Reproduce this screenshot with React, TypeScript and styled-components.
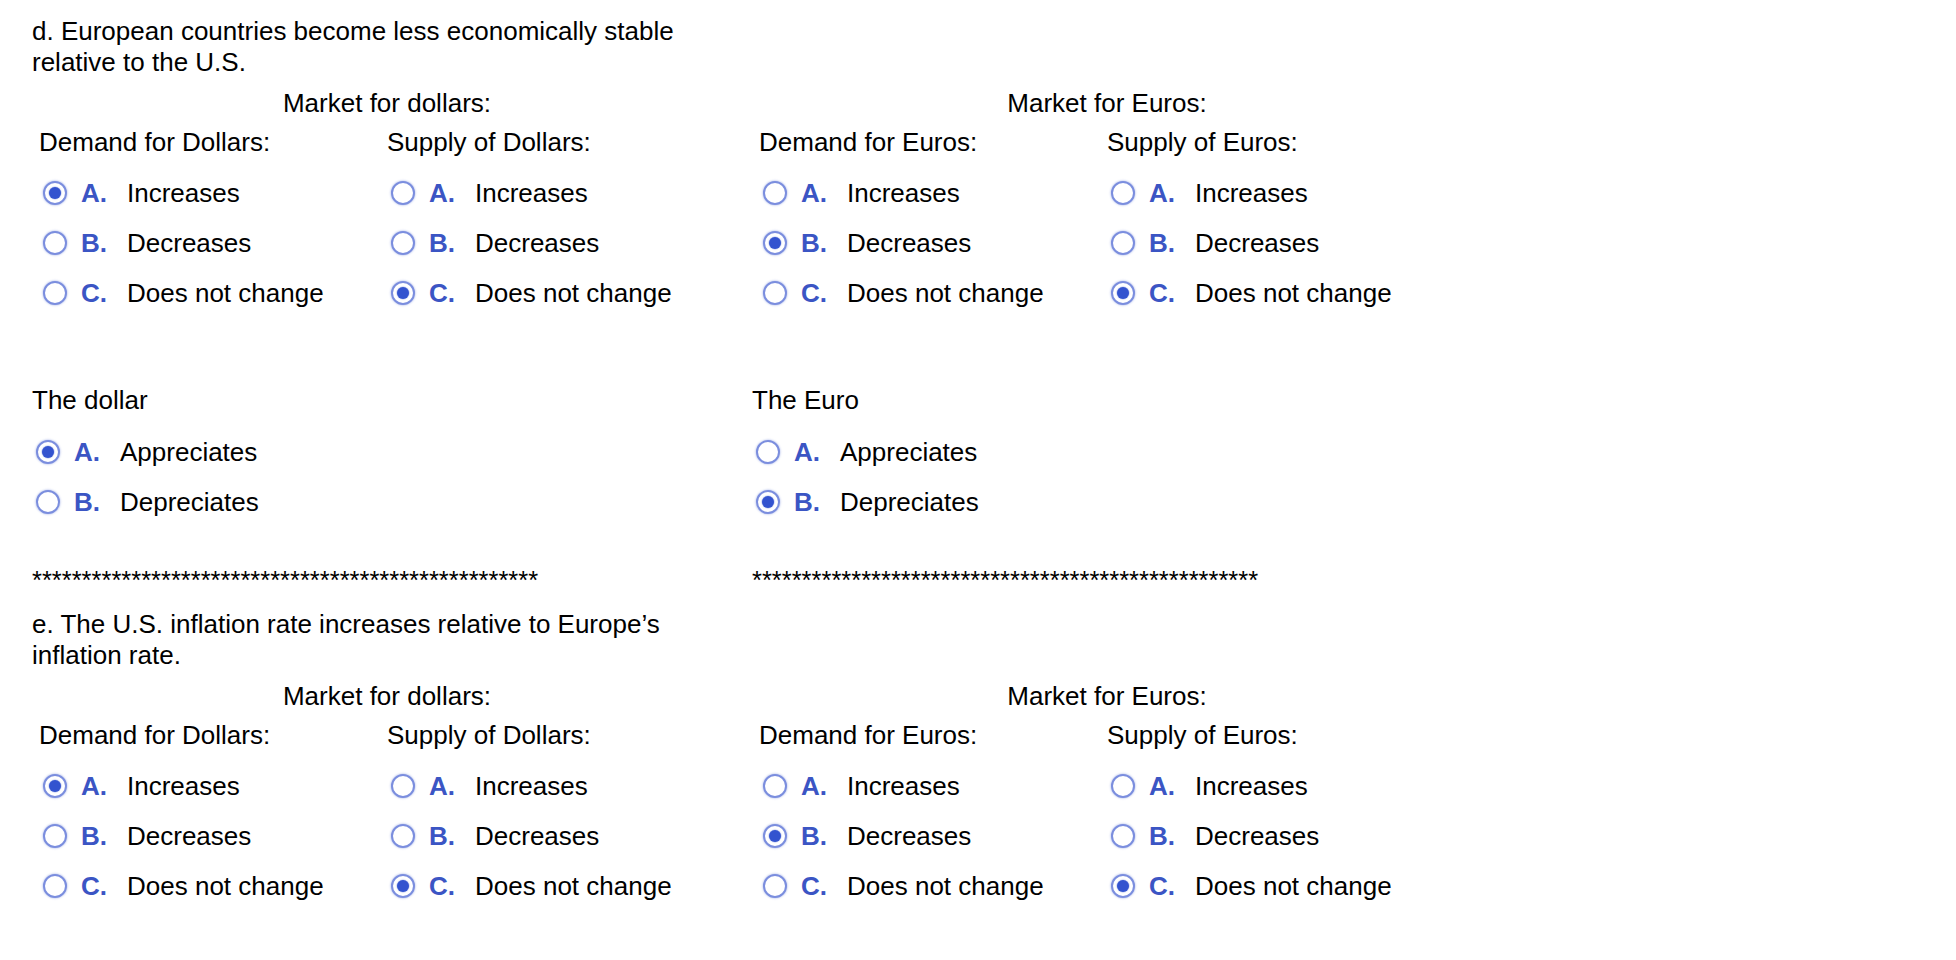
import React from "react";
import styled, { createGlobalStyle } from "styled-components";

const GlobalStyle = createGlobalStyle`
  html, body { margin: 0; padding: 0; background: #ffffff; }
  body {
    font-family: "Liberation Sans", Arial, Helvetica, sans-serif;
    font-size: 26px;
    color: #000000;
  }
`;

const Page = styled.main`
  padding: 16px 0 0 32px;
`;

const Problem = styled.section<{ $top: number }>`
  margin-top: ${(p) => p.$top}px;
`;

const Prompt = styled.p`
  margin: 0;
  max-width: 700px;
  line-height: 31px;
`;

const Pair = styled.div<{ $top: number }>`
  display: grid;
  grid-template-columns: 720px 720px;
  margin-top: ${(p) => p.$top}px;
`;

const MarketTable = styled.div`
  display: grid;
  grid-template-columns: 348px 348px;
  padding-left: 7px;
`;

const MarketTitle = styled.div`
  grid-column: 1 / span 2;
  text-align: center;
  line-height: 31px;
`;

const MarketColumn = styled.div`
  display: flex;
  flex-direction: column;
`;

const ColumnHeading = styled.div`
  margin-top: 7.5px;
  line-height: 31px;
  white-space: nowrap;
`;

const Outcome = styled.div`
  display: flex;
  flex-direction: column;
`;

const OutcomeTitle = styled.div`
  line-height: 31px;
`;

const OptionList = styled.div<{ $top: number }>`
  display: flex;
  flex-direction: column;
  margin-top: ${(p) => p.$top}px;
`;

const OptionRow = styled.div`
  display: flex;
  align-items: center;
  height: 50px;
  line-height: 50px;
  white-space: nowrap;
`;

const Radio = styled.span<{ $checked: boolean }>`
  box-sizing: border-box;
  flex: none;
  width: 24px;
  height: 24px;
  margin-left: 4px;
  margin-right: 14px;
  border-radius: 50%;
  border: 2px solid #7b8ede;
  box-shadow: 0 0 2px 0.5px rgba(110, 132, 217, 0.45);
  display: flex;
  align-items: center;
  justify-content: center;
  background: #ffffff;

  &::after {
    content: "";
    display: ${(p) => (p.$checked ? "block" : "none")};
    width: 12px;
    height: 12px;
    border-radius: 50%;
    background: #3353cf;
    box-shadow: 0 0 1px 0.5px rgba(51, 83, 207, 0.4);
  }
`;

const Letter = styled.span`
  flex: none;
  width: 46px;
  color: #3b55c4;
  font-weight: bold;
`;

const OptionText = styled.span``;

const Stars = styled.div`
  line-height: 31px;
  white-space: nowrap;
  font-size: 25.5px;
`;

type Choice = { letter: string; text: string };

const changeChoices: Choice[] = [
  { letter: "A.", text: "Increases" },
  { letter: "B.", text: "Decreases" },
  { letter: "C.", text: "Does not change" },
];

const valueChoices: Choice[] = [
  { letter: "A.", text: "Appreciates" },
  { letter: "B.", text: "Depreciates" },
];

const Options: React.FC<{ choices: Choice[]; selected: number; top: number }> = ({
  choices,
  selected,
  top,
}) => (
  <OptionList $top={top}>
    {choices.map((c, i) => (
      <OptionRow key={c.letter}>
        <Radio $checked={i === selected} />
        <Letter>{c.letter}</Letter>
        <OptionText>{c.text}</OptionText>
      </OptionRow>
    ))}
  </OptionList>
);

type MarketSpec = {
  title: string;
  columns: { heading: string; selected: number }[];
};

const Market: React.FC<{ spec: MarketSpec }> = ({ spec }) => (
  <MarketTable>
    <MarketTitle>{spec.title}</MarketTitle>
    {spec.columns.map((col) => (
      <MarketColumn key={col.heading}>
        <ColumnHeading>{col.heading}</ColumnHeading>
        <Options choices={changeChoices} selected={col.selected} top={10.8} />
      </MarketColumn>
    ))}
  </MarketTable>
);

const markets: MarketSpec[] = [
  {
    title: "Market for dollars:",
    columns: [
      { heading: "Demand for Dollars:", selected: 0 },
      { heading: "Supply of Dollars:", selected: 2 },
    ],
  },
  {
    title: "Market for Euros:",
    columns: [
      { heading: "Demand for Euros:", selected: 1 },
      { heading: "Supply of Euros:", selected: 2 },
    ],
  },
];

const Markets: React.FC = () => (
  <Pair $top={10}>
    {markets.map((m) => (
      <Market key={m.title} spec={m} />
    ))}
  </Pair>
);

const stars = "*".repeat(51);

export default function App() {
  return (
    <>
      <GlobalStyle />
      <Page>
        <Problem $top={0}>
          <Prompt>d. European countries become less economically stable relative to the U.S.</Prompt>
          <Markets />
          <Pair $top={66.9}>
            <Outcome>
              <OutcomeTitle>The dollar</OutcomeTitle>
              <Options choices={valueChoices} selected={0} top={10.8} />
            </Outcome>
            <Outcome>
              <OutcomeTitle>The Euro</OutcomeTitle>
              <Options choices={valueChoices} selected={1} top={10.8} />
            </Outcome>
          </Pair>
          <Pair $top={38.5}>
            <Stars>{stars}</Stars>
            <Stars>{stars}</Stars>
          </Pair>
        </Problem>
        <Problem $top={12.7}>
          <Prompt>e. The U.S. inflation rate increases relative to Europe’s inflation rate.</Prompt>
          <Markets />
        </Problem>
      </Page>
    </>
  );
}
